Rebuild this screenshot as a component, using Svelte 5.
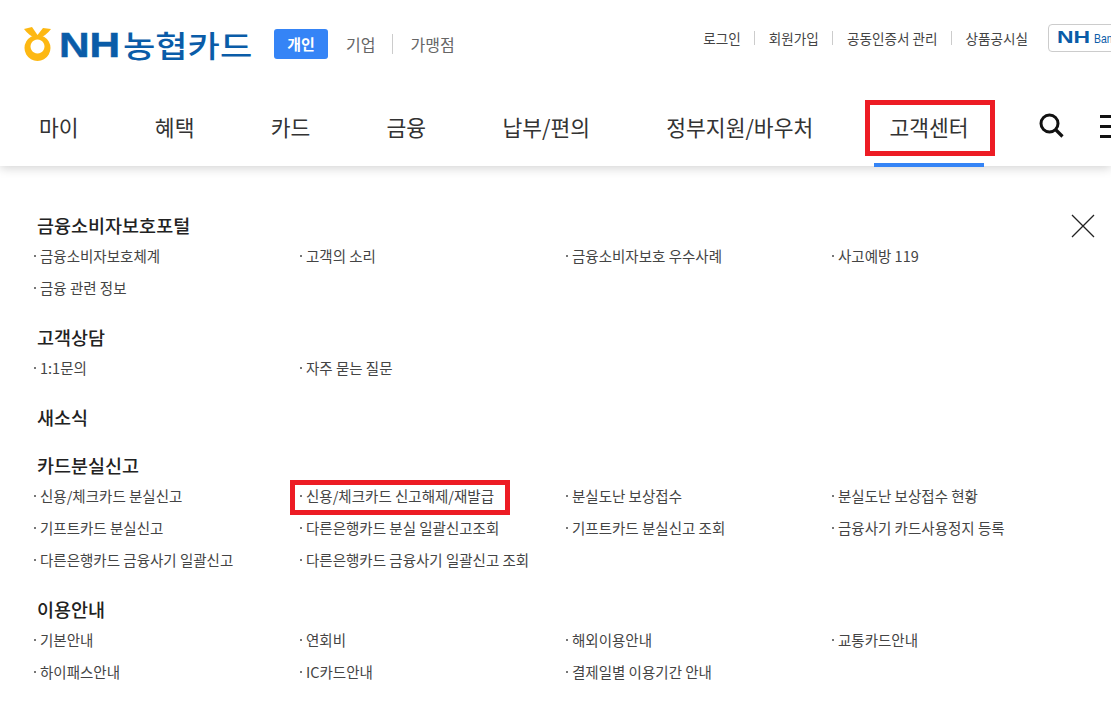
<script>
  const top = ['로그인', '회원가입', '공동인증서 관리', '상품공시실'];
  const nav = ['마이', '혜택', '카드', '금융', '납부/편의', '정부지원/바우처', '고객센터'];
  const groups = [
    { title: '금융소비자보호포털', items: ['금융소비자보호체계', '고객의 소리', '금융소비자보호 우수사례', '사고예방 119', '금융 관련 정보'] },
    { title: '고객상담', items: ['1:1문의', '자주 묻는 질문'] },
    { title: '새소식', items: [] },
    { title: '카드분실신고', items: ['신용/체크카드 분실신고', '신용/체크카드 신고해제/재발급', '분실도난 보상접수', '분실도난 보상접수 현황', '기프트카드 분실신고', '다른은행카드 분실 일괄신고조회', '기프트카드 분실신고 조회', '금융사기 카드사용정지 등록', '다른은행카드 금융사기 일괄신고', '다른은행카드 금융사기 일괄신고 조회'] },
    { title: '이용안내', items: ['기본안내', '연회비', '해외이용안내', '교통카드안내', '하이패스안내', 'IC카드안내', '결제일별 이용기간 안내'] }
  ];
</script>

<div class="page">
  <header class="header">
    <div class="util">
      <div class="brand">
        <svg class="emblem" width="28" height="34" viewBox="0 0 28 34" aria-hidden="true">
          <path d="M0 2 L8 0 L13.5 8 L19 1 L27 2 Q22 9 13.5 12 Q5 9 0 2 Z" fill="#fdb813" />
          <path fill-rule="evenodd" d="M13.5 8 A13 13 0 1 1 13.49 8 Z M13.5 12.5 A7 7 0 1 0 13.51 12.5 Z" fill="#fdb813" />
        </svg>
        <span class="wordmark"><b>NH</b><span>농협카드</span></span>
      </div>
      <div class="tabs">
        <span class="tab active">개인</span>
        <span class="tab">기업</span>
        <i class="tabsep"></i>
        <span class="tab">가맹점</span>
      </div>
      <div class="toplinks">
        {#each top as t, i}
          {#if i > 0}<i class="sep"></i>{/if}
          <span>{t}</span>
        {/each}
        <span class="bank"><b>NH</b><em>Bank</em></span>
      </div>
    </div>
    <nav class="nav">
      {#each nav as n, i}
        <span class="navitem" class:current={i === 6}>{n}</span>
      {/each}
      <svg class="search" width="26" height="26" viewBox="0 0 26 26" aria-hidden="true">
        <circle cx="10.5" cy="10.5" r="8.5" fill="none" stroke="#111" stroke-width="3" />
        <path d="M16.5 16.5 L23.5 23.5" stroke="#111" stroke-width="3.2" />
      </svg>
      <span class="burger"><i></i><i></i><i></i></span>
      <span class="mark"></span>
    </nav>
  </header>

  <main class="menu">
    <svg class="close" width="26" height="26" viewBox="0 0 26 26" aria-hidden="true">
      <path d="M2 2 L24 24 M24 2 L2 24" stroke="#222" stroke-width="1.3" fill="none" />
    </svg>
    {#each groups as g}
      <section class="group">
        <h3>{g.title}</h3>
        {#if g.items.length}
          <ul>
            {#each g.items as it}
              <li><span class="lnk" class:boxed={it === '신용/체크카드 신고해제/재발급'}>{it}</span></li>
            {/each}
          </ul>
        {/if}
      </section>
    {/each}
  </main>
</div>

<style>
  :global(body) {
    margin: 0;
    background: #fff;
    overflow: hidden;
  }
  .page {
    width: 1111px;
    height: 709px;
    overflow: hidden;
    font-family: "Noto Sans CJK KR", "Noto Sans", sans-serif;
    color: #333;
  }
  .header {
    height: 166px;
    box-shadow: 0 2px 10px rgba(0, 0, 0, 0.18);
    position: relative;
    background: #fff;
  }
  .util {
    height: 88px;
    display: flex;
    align-items: center;
    padding-left: 24px;
  }
  .brand {
    display: flex;
    align-items: center;
    gap: 7px;
    width: 250px;
    flex: none;
  }
  .emblem {
    flex: none;
    margin-top: -1px;
  }
  .wordmark {
    display: flex;
    align-items: center;
    color: #0a5ca8;
    line-height: 1;
    white-space: nowrap;
  }
  .wordmark b {
    display: inline-block;
    width: 64px;
    font-family: "Liberation Sans", sans-serif;
    font-size: 35px;
    font-weight: 700;
    -webkit-text-stroke: 0.5px #0a5ca8;
    transform: scaleX(1.21);
    transform-origin: left center;
  }
  .wordmark span {
    display: inline-block;
    font-size: 30px;
    font-weight: 500;
    transform: scaleX(1.17);
    transform-origin: left center;
  }
  .tabs {
    display: flex;
    align-items: center;
    font-size: 16px;
    color: #666;
  }
  .tab {
    padding: 0 18px 0 18px;
  }
  .tab:last-child {
    padding-left: 17px;
  }
  .tab.active {
    width: 54px;
    height: 30px;
    line-height: 30px;
    padding: 0;
    text-align: center;
    background: #3584f6;
    color: #fff;
    font-weight: 700;
    font-size: 15px;
    border-radius: 3px;
  }
  .tabsep {
    width: 1px;
    height: 20px;
    margin-left: -1px;
    background: #ccc;
  }
  .toplinks {
    margin-left: auto;
    display: flex;
    align-items: center;
    gap: 13.5px;
    font-size: 13.6px;
    color: #444;
    margin-right: -47px;
    white-space: nowrap;
    margin-top: -12px;
  }
  .sep {
    width: 1px;
    height: 14px;
    background: #ccc;
  }
  .bank {
    display: flex;
    align-items: center;
    width: 100px;
    height: 26px;
    border: 1px solid #ccc;
    border-radius: 4px;
    padding-left: 8px;
    margin-left: 6.5px;
    overflow: hidden;
  }
  .bank b {
    display: inline-block;
    width: 37px;
    font-family: "Liberation Sans", sans-serif;
    font-size: 17px;
    font-weight: 700;
    color: #0a5ca8;
    transform: scaleX(1.35);
    transform-origin: left center;
  }
  .bank em {
    display: inline-block;
    font-style: normal;
    font-family: "Liberation Sans", sans-serif;
    font-size: 13px;
    color: #0a5ca8;
    transform: scaleX(0.8);
    transform-origin: left center;
  }
  .nav {
    display: flex;
    align-items: center;
    height: 76px;
    padding-left: 39px;
    gap: 76.3px;
    font-size: 21.5px;
    color: #333;
    white-space: nowrap;
  }
  .navitem.current {
    position: relative;
  }
  .navitem.current::after {
    content: "";
    position: absolute;
    left: -15px;
    right: -15px;
    top: 52px;
    height: 4px;
    background: #3584f6;
  }
  .search {
    margin-left: -6px;
    flex: none;
  }
  .burger {
    display: flex;
    flex-direction: column;
    gap: 7px;
    width: 30px;
    flex: none;
    margin-left: -41px;
  }
  .burger i {
    height: 3px;
    background: #111;
  }
  .mark {
    position: absolute;
    left: 865px;
    top: 100px;
    width: 120px;
    height: 46px;
    border: 5px solid #ed1c24;
  }
  .menu {
    position: relative;
    padding: 44px 0 0 33px;
  }
  .close {
    position: absolute;
    left: 1070px;
    top: 47px;
  }
  .group {
    margin-bottom: 18px;
  }
  h3 {
    margin: 0;
    padding-left: 4px;
    font-size: 18.5px;
    line-height: 30px;
    font-weight: 500;
    color: #222;
  }
  ul {
    list-style: none;
    margin: 0;
    padding: 0;
    display: grid;
    grid-template-columns: repeat(4, 266px);
    grid-auto-rows: 32px;
  }
  li {
    font-size: 14.5px;
    line-height: 32px;
    color: #444;
    white-space: nowrap;
  }
  .lnk {
    position: relative;
    display: inline-block;
    height: 32px;
    padding-left: 7px;
  }
  .lnk::before {
    content: "";
    position: absolute;
    left: 1px;
    top: 50%;
    width: 2px;
    height: 2px;
    margin-top: -1px;
    background: #777;
  }
  .boxed::after {
    content: "";
    position: absolute;
    left: -9px;
    top: 0;
    right: -16px;
    bottom: -3px;
    border: 5px solid #ed1c24;
  }
</style>
